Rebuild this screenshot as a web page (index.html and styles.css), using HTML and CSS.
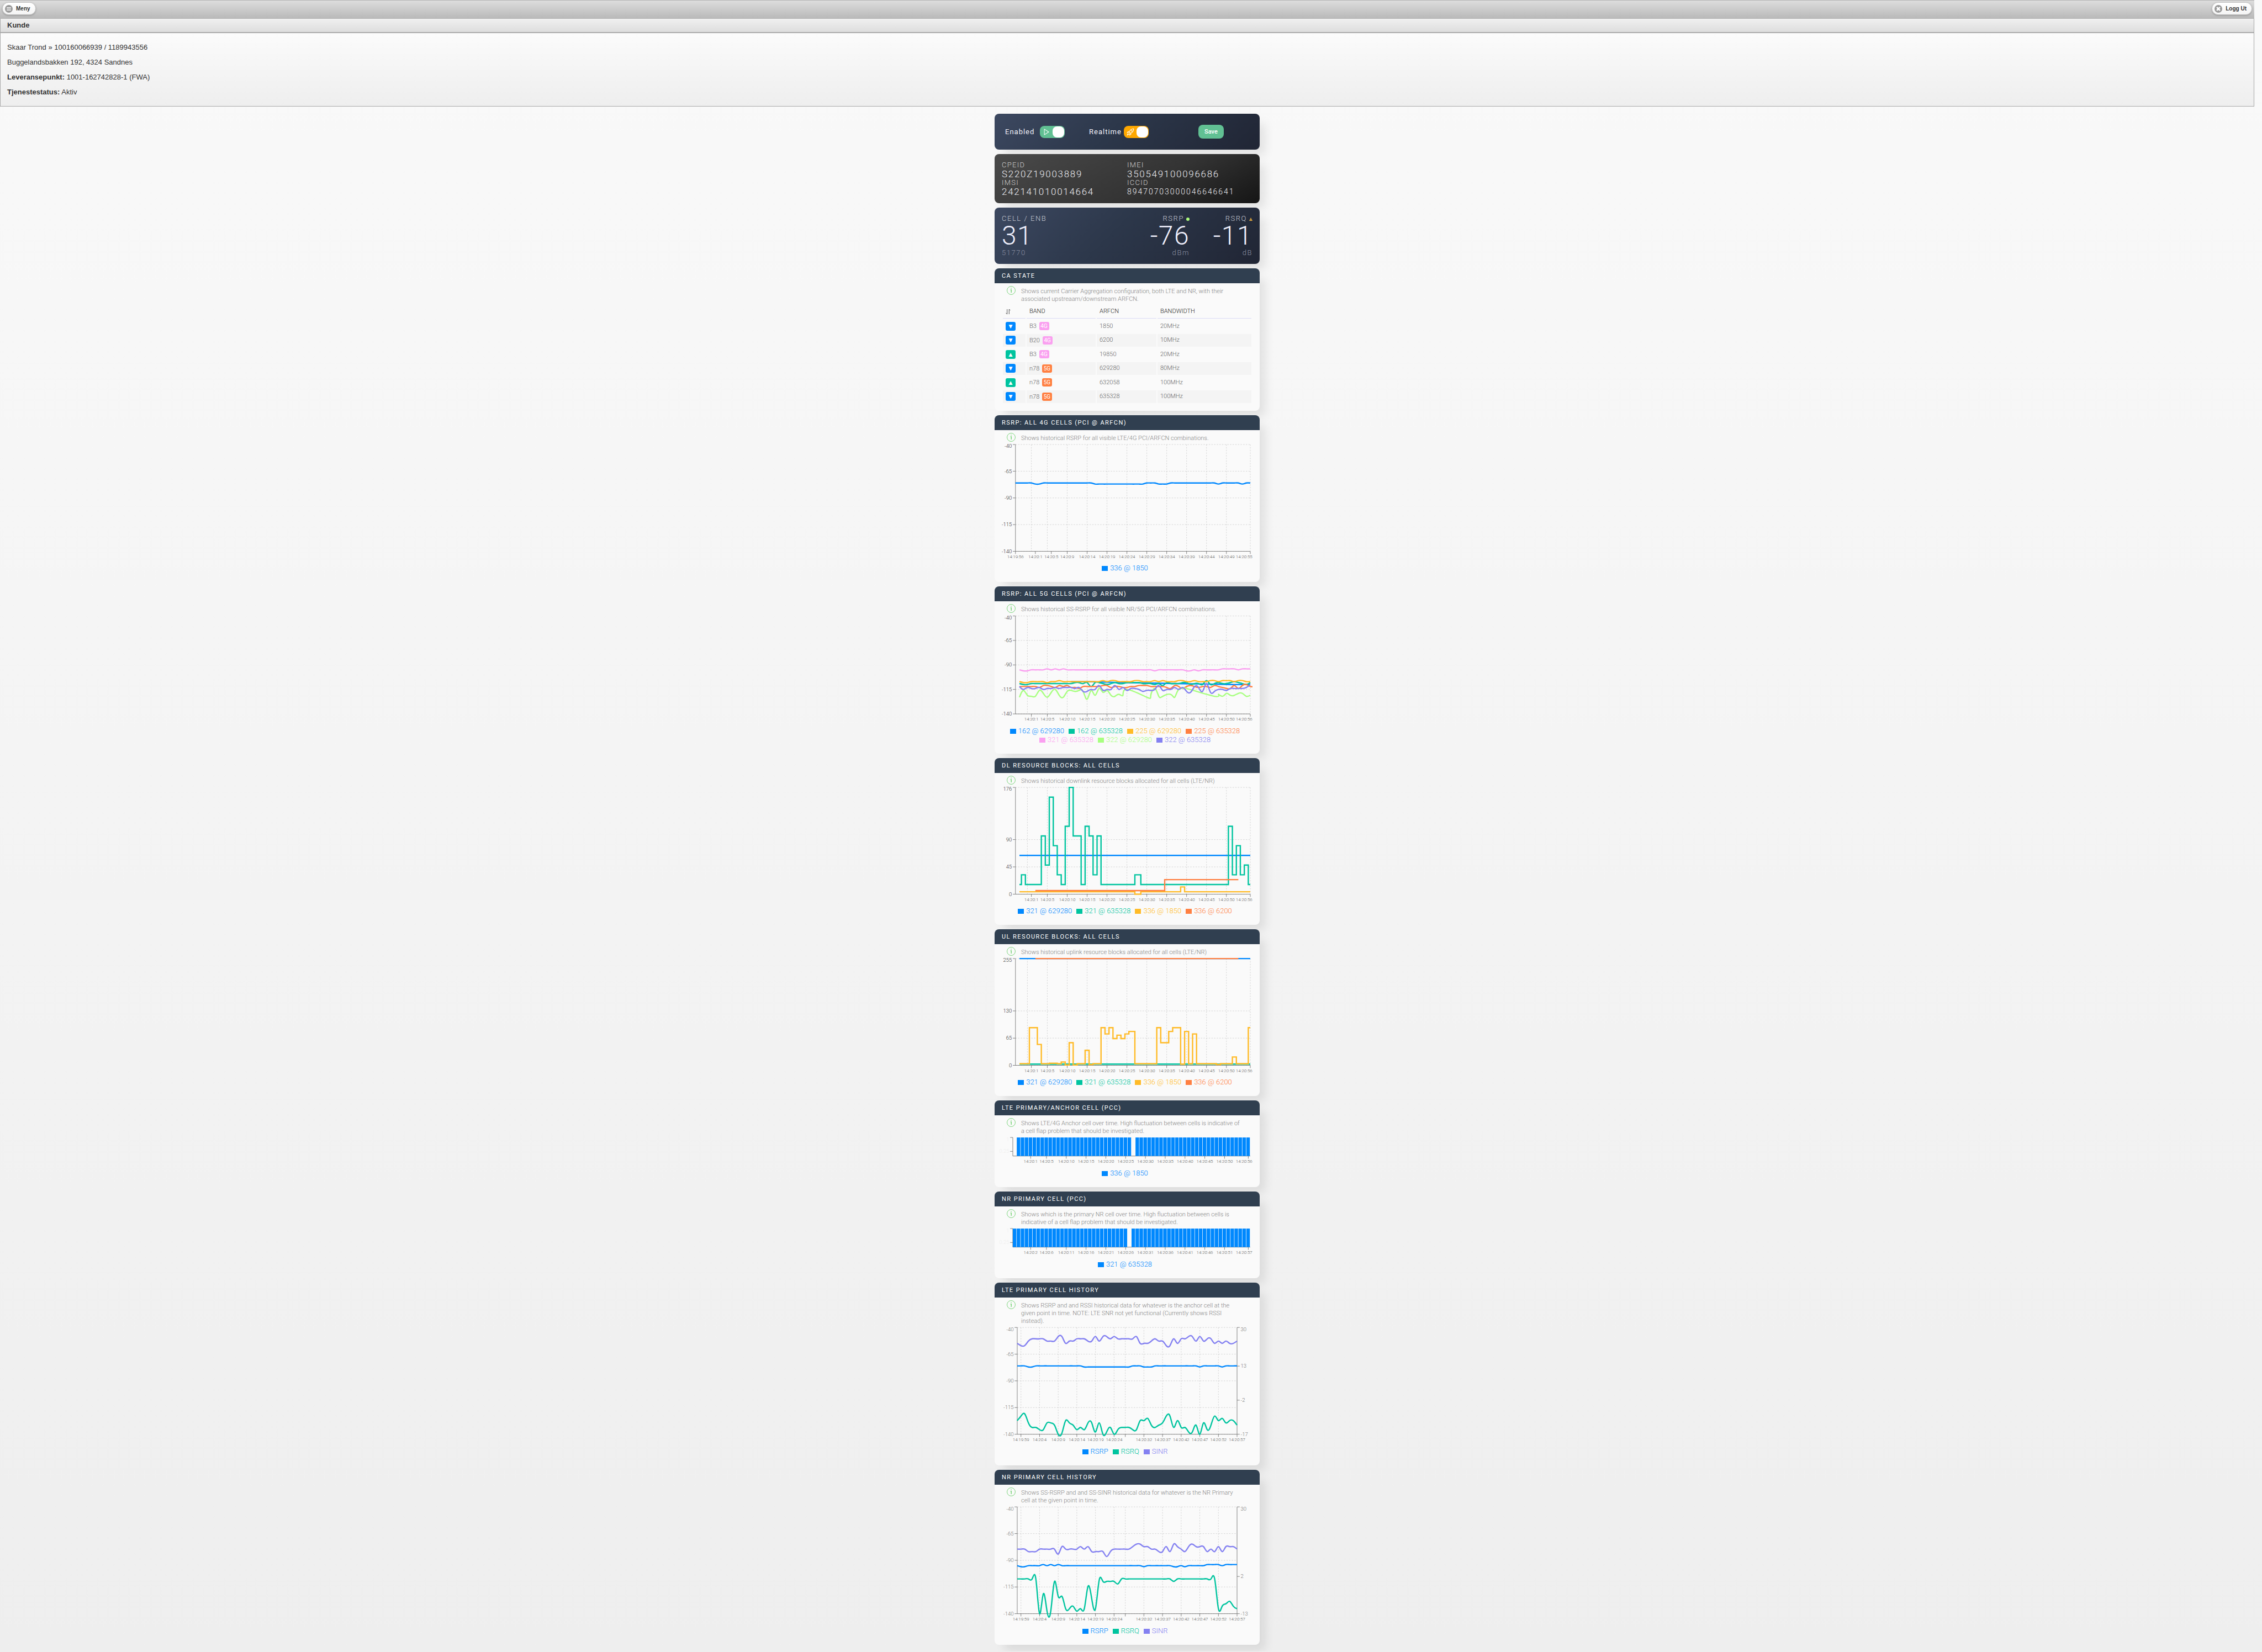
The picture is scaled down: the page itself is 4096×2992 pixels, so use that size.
FILE: index.html
```html
<!DOCTYPE html>
<html lang="no">
<head>
<meta charset="utf-8">
<meta name="viewport" content="width=device-width, initial-scale=1">
<title>Kunde</title>
<link rel="stylesheet" href="styles.css">
</head>
<body>
<header class="topbar">
  <button type="button" class="pill">
    <svg class="pill-icon" viewBox="0 0 18 18" aria-hidden="true"><circle cx="9" cy="9" r="9" fill="#999"/><path d="M4 6h10M4 9h10M4 12h10" stroke="#fff" stroke-width="1.6"/></svg>
    Meny
  </button>
  <button type="button" class="pill">
    <svg class="pill-icon" viewBox="0 0 18 18" aria-hidden="true"><circle cx="9" cy="9" r="9" fill="#999"/><path d="M5.2 5.2l7.6 7.6M12.8 5.2l-7.6 7.6" stroke="#fff" stroke-width="3.4"/></svg>
    Logg Ut
  </button>
</header>

<section class="customer">
  <h2 class="customer-title">Kunde</h2>
  <div class="customer-body">
    <p>Skaar Trond » 100160066939 / 1189943556</p>
    <p>Buggelandsbakken 192, 4324 Sandnes</p>
    <p><strong>Leveransepunkt:</strong> 1001-162742828-1 (FWA)</p>
    <p><strong>Tjenestestatus:</strong> Aktiv</p>
  </div>
</section>

<main class="cards">
  <form class="card dark controls">
    <label class="control">
      <span class="control-name">Enabled</span>
      <span class="switch switch-green">
        <input type="checkbox" checked>
        <svg viewBox="0 0 18 18" aria-hidden="true"><path d="M4 2.500v13l10-6.500z" fill="none" stroke="#fff" stroke-width="1.300" stroke-linejoin="round"/></svg>
      </span>
    </label>
    <label class="control">
      <span class="control-name">Realtime</span>
      <span class="switch switch-orange">
        <input type="checkbox" checked>
        <svg viewBox="0 0 18 18" aria-hidden="true"><path d="M6 9.500C7.500 5 11 1.500 16.500 1.500 16.500 7 13 10.500 8.500 12zM6.600 8H3.500L1.500 11l4 .2M10 11.400v3.100l-3 2-.3-4M3.500 13l-2 3.500 3.500-2" fill="none" stroke="#fff" stroke-width="1.300" stroke-linejoin="round"/><circle cx="11.800" cy="6.200" r="1.400" fill="none" stroke="#fff"/></svg>
      </span>
    </label>
    <button type="button" class="save">Save</button>
  </form>

  <section class="card black ids">
    <dl class="id-column">
      <dt>CPEID</dt><dd>S220Z19003889</dd>
      <dt>IMSI</dt><dd>242141010014664</dd>
    </dl>
    <dl class="id-column">
      <dt>IMEI</dt><dd>350549100096686</dd>
      <dt>ICCID</dt><dd class="long">89470703000046646641</dd>
    </dl>
  </section>

  <section class="card dark signal">
    <div class="metric">
      <span class="metric-name">CELL / ENB</span>
      <span class="metric-value">31</span>
      <span class="metric-unit">51770</span>
    </div>
    <div class="metric right">
      <span class="metric-name">RSRP<svg class="mark" viewBox="0 0 8 8" aria-hidden="true"><circle cx="4" cy="4" r="4" fill="#adfb7c"/></svg></span>
      <span class="metric-value">-76</span>
      <span class="metric-unit">dBm</span>
    </div>
    <div class="metric right">
      <span class="metric-name">RSRQ<svg class="mark low" viewBox="0 0 8 8" aria-hidden="true"><path d="M4 0l4 8H0z" fill="#d9a441"/><path d="M4 3v2.500M4 6.200v1" stroke="#6b5427" stroke-width=".8"/></svg></span>
      <span class="metric-value">-11</span>
      <span class="metric-unit">dB</span>
    </div>
  </section>

  <section class="card panel">
    <h3>CA STATE</h3>
    <p class="info">Shows current Carrier Aggregation configuration, both LTE and NR, with their associated upstreaam/downstream ARFCN.</p>
    <table class="carriers">
      <thead><tr><th class="c-dir"><svg class="updown" viewBox="0 0 10 12" aria-label="Direction"><path d="M3 1v10M.500 8.500L3 11M7 11V1M9.500 3.500L7 1" fill="none" stroke="#444"/></svg></th><th class="c-band">BAND</th><th class="c-arfcn">ARFCN</th><th>BANDWIDTH</th></tr></thead>
      <tbody>
        <tr><td><span class="dir down">▼</span></td><td>B3 <span class="gen g4">4G</span></td><td>1850</td><td>20MHz</td></tr>
        <tr><td><span class="dir down">▼</span></td><td>B20 <span class="gen g4">4G</span></td><td>6200</td><td>10MHz</td></tr>
        <tr><td><span class="dir up">▲</span></td><td>B3 <span class="gen g4">4G</span></td><td>19850</td><td>20MHz</td></tr>
        <tr><td><span class="dir down">▼</span></td><td>n78 <span class="gen g5">5G</span></td><td>629280</td><td>80MHz</td></tr>
        <tr><td><span class="dir up">▲</span></td><td>n78 <span class="gen g5">5G</span></td><td>632058</td><td>100MHz</td></tr>
        <tr><td><span class="dir down">▼</span></td><td>n78 <span class="gen g5">5G</span></td><td>635328</td><td>100MHz</td></tr>
      </tbody>
    </table>
  </section>

  <section class="card panel">
    <h3>RSRP: ALL 4G CELLS (PCI @ ARFCN)</h3>
    <p class="info">Shows historical RSRP for all visible LTE/4G PCI/ARFCN combinations.</p>
    <svg class="chart" id="rsrp-4g" viewBox="0 0 568 275"></svg>
    <ul class="legend"><li class="blue">336 @ 1850</li></ul>
  </section>

  <section class="card panel">
    <h3>RSRP: ALL 5G CELLS (PCI @ ARFCN)</h3>
    <p class="info">Shows historical SS-RSRP for all visible NR/5G PCI/ARFCN combinations.</p>
    <svg class="chart medium" id="rsrp-5g" viewBox="0 0 568 255"></svg>
    <ul class="legend"><li class="blue">162 @ 629280</li><li class="teal">162 @ 635328</li><li class="yellow">225 @ 629280</li><li class="orange">225 @ 635328</li><li class="pink">321 @ 635328</li><li class="lime">322 @ 629280</li><li class="purple">322 @ 635328</li></ul>
  </section>

  <section class="card panel">
    <h3>DL RESOURCE BLOCKS: ALL CELLS</h3>
    <p class="info">Shows historical downlink resource blocks allocated for all cells (LTE/NR)</p>
    <svg class="chart" id="rb-dl" viewBox="0 0 568 275"></svg>
    <ul class="legend"><li class="blue">321 @ 629280</li><li class="teal">321 @ 635328</li><li class="yellow">336 @ 1850</li><li class="orange">336 @ 6200</li></ul>
  </section>

  <section class="card panel">
    <h3>UL RESOURCE BLOCKS: ALL CELLS</h3>
    <p class="info">Shows historical uplink resource blocks allocated for all cells (LTE/NR)</p>
    <svg class="chart" id="rb-ul" viewBox="0 0 568 275"></svg>
    <ul class="legend"><li class="blue">321 @ 629280</li><li class="teal">321 @ 635328</li><li class="yellow">336 @ 1850</li><li class="orange">336 @ 6200</li></ul>
  </section>

  <section class="card panel">
    <h3>LTE PRIMARY/ANCHOR CELL (PCC)</h3>
    <p class="info">Shows LTE/4G Anchor cell over time. High fluctuation between cells is indicative of a cell flap problem that should be investigated.</p>
    <svg class="chart small" id="pcc-lte" viewBox="0 0 568 76"></svg>
    <ul class="legend"><li class="blue">336 @ 1850</li></ul>
  </section>

  <section class="card panel">
    <h3>NR PRIMARY CELL (PCC)</h3>
    <p class="info">Shows which is the primary NR cell over time. High fluctuation between cells is indicative of a cell flap problem that should be investigated.</p>
    <svg class="chart small" id="pcc-nr" viewBox="0 0 568 76"></svg>
    <ul class="legend"><li class="blue">321 @ 635328</li></ul>
  </section>

  <section class="card panel">
    <h3>LTE PRIMARY CELL HISTORY</h3>
    <p class="info">Shows RSRP and and RSSI historical data for whatever is the anchor cell at the given point in time. NOTE: LTE SNR not yet functional (Currently shows RSSI instead).</p>
    <svg class="chart large" id="history-lte" viewBox="0 0 568 276"></svg>
    <ul class="legend"><li class="blue">RSRP</li><li class="teal">RSRQ</li><li class="purple">SINR</li></ul>
  </section>

  <section class="card panel">
    <h3>NR PRIMARY CELL HISTORY</h3>
    <p class="info">Shows SS-RSRP and and SS-SINR historical data for whatever is the NR Primary cell at the given point in time.</p>
    <svg class="chart large" id="history-nr" viewBox="0 0 568 276"></svg>
    <ul class="legend"><li class="blue">RSRP</li><li class="teal">RSRQ</li><li class="purple">SINR</li></ul>
  </section>
</main>
<script src="charts.js"></script>
</body>
</html>
```
FILE: styles.css
```css
* { box-sizing: border-box; }

html { min-height: 100%; background: linear-gradient(#f9f9f9, #eeeeee); }

body {
  margin: 0;
  padding-right: 14px;
  color: #333;
  font: 13px/27px "Liberation Sans", Arial, sans-serif;
}

h2, h3, p, dl, dt, dd, ul { margin: 0; padding: 0; }

/* Top bar */
.topbar {
  display: flex;
  justify-content: space-between;
  align-items: flex-start;
  height: 34px;
  padding: 3px 4px;
  background: linear-gradient(#dddddd, #b9b9b9);
  border-top: 1px solid #b3b3b3;
  border-bottom: 1px solid #b3b3b3;
}

.pill {
  display: flex;
  align-items: center;
  gap: 6px;
  height: 23px;
  padding: 0 9px 0 4px;
  color: #333;
  font: bold 10px/12px "Liberation Sans", Arial, sans-serif;
  text-shadow: 0 1px 0 #fff;
  background: linear-gradient(#ffffff, #f4f4f4);
  border: 1px solid #c4c4c4;
  border-radius: 12px;
  box-shadow: 0 1px 3px rgba(0, 0, 0, .25);
}

.pill-icon { width: 14px; height: 14px; }

/* Customer */
.customer { border: 1px solid #a8a8a8; border-top: 0; }

.customer-title {
  height: 26px;
  padding: 0 12px;
  font-size: 13px;
  line-height: 24px;
  text-shadow: 0 1px 0 #fff;
  background: linear-gradient(#f0f0f0, #dddddd);
  border-bottom: 2px solid #ababab;
}

.customer-body {
  padding: 12px 12px;
  background: linear-gradient(#fbfbfb, #eeeeee);
}

/* Cards */
.cards {
  display: flex;
  flex-direction: column;
  gap: 8px;
  max-width: 480px;
  margin: 13px auto 12px;
  font-family: Roboto, "Open Sans", sans-serif;
  font-weight: 300;
}

.card {
  border-radius: 8px;
  box-shadow: 14px 14px 18px -4px rgba(0, 0, 0, .09);
}

.dark { background: linear-gradient(135deg, #3c4860 0%, #2c374a 45%, #202534 100%); }
.black { background: linear-gradient(150deg, #4a4a4a 0%, #333333 60%, #151515 100%); }

.controls {
  display: grid;
  grid-template-columns: 152px 198px auto;
  align-items: center;
  justify-items: start;
  height: 65px;
  padding: 0 19px;
  color: #f2f2fa;
}

.control { display: flex; align-items: center; font-weight: 400; }
.control-name { width: 63px; line-height: 22px; letter-spacing: 1px; }
.switch { position: relative; display: block; width: 45px; height: 22px; }

.switch input {
  appearance: none;
  display: flex;
  justify-content: flex-end;
  width: 45px;
  height: 22px;
  margin: 0;
  padding: 1px;
  border-radius: 8px;
}

.switch input::before { content: ""; width: 21px; border-radius: 8px; background: #fff; }
.switch-green input { background: #61c093; }
.switch-orange input { background: #ffa800; }
.switch svg { position: absolute; left: 5px; top: 4px; width: 14px; height: 14px; }

.save {
  width: 46px;
  height: 25px;
  padding: 0;
  color: #fff;
  font: 500 11px/14px Roboto, sans-serif;
  background: #61c093;
  border: 0;
  border-radius: 8px;
}

.ids {
  display: grid;
  grid-template-columns: 1fr 1fr;
  padding: 13px 13px 12px;
  color: #f0f0f5;
}

.id-column dt { color: #d0d0d0; font-size: 13px; line-height: 14px; letter-spacing: 0.1em; }
.id-column dd { font-size: 17px; line-height: 18px; letter-spacing: 0.1em; }
.id-column .long { font-size: 14px; letter-spacing: 0.14em; }

.signal {
  display: grid;
  grid-template-columns: 1fr auto 114px;
  padding: 13px;
}

.metric { display: flex; flex-direction: column; }
.metric.right { text-align: right; }
.metric-name { color: #c5c8d2; line-height: 14px; letter-spacing: 0.12em; }
.metric-value { color: #efeffc; font-size: 48px; line-height: 47px; letter-spacing: 0.03em; }
.metric-unit { color: #8a8fa2; line-height: 15px; letter-spacing: 0.12em; }
.mark { width: 6px; height: 6px; margin-left: 4px; }

/* Panels */
.panel { background: #fafafa; padding-bottom: 17px; }

.panel h3 {
  height: 27px;
  padding: 0 13px;
  color: #fff;
  font-size: 11px;
  font-weight: 400;
  line-height: 28px;
  letter-spacing: 0.13em;
  background: #303f50;
  border-radius: 8px 8px 0 0;
}

.info {
  padding: 8px 34px 0 48px;
  color: #858585;
  font-size: 11px;
  line-height: 14px;
  background: url("data:image/svg+xml,%3Csvg xmlns='http://www.w3.org/2000/svg' viewBox='0 0 20 20' fill='none' stroke='%235fcc5f'%3E%3Ccircle cx='10' cy='10' r='9.300'/%3E%3Cpath d='M8.500 8.500H10.200V15M10 4.500V6' stroke-width='1.500'/%3E%3C/svg%3E") 22px 5px / 16px 16px no-repeat;
}

.carriers {
  width: calc(100% - 26px);
  height: 182px;
  margin: 1px 13px -5px;
  border-spacing: 2px;
  table-layout: fixed;
  font-size: 11px;
  line-height: 14px;
}

.carriers th { height: 25px; padding: 0 5px; text-align: left; font-weight: 300; color: #222; border-bottom: 1px solid #dcdcf6; }
.carriers td { padding: 0 5px; color: #666; }
.carriers tbody tr:nth-child(even) td { background: #f4f4f4; }
.c-dir { width: 41px; }
.c-band { width: 125px; }
.c-arfcn { width: 108px; }
.updown { display: block; width: 9px; height: 11px; }

.dir, .gen {
  display: inline-block;
  width: 18px;
  color: #fff;
  text-align: center;
  border-radius: 3px;
}

.dir { height: 16px; font: 9px/16px "DejaVu Sans", sans-serif; vertical-align: middle; }
.gen { height: 15px; margin-left: 2px; font-size: 10px; font-weight: 400; line-height: 15px; }
.down { background: #0088fe; }
.up { background: #00c49f; }
.g4 { background: #faa0f0; }
.g5 { background: #ff8042; }

/* Charts */
.chart { display: block; width: calc(100% - 26px); height: 220px; margin: 0 13px; }
.chart.medium { height: 205px; }
.chart.small { height: 61px; overflow: visible; }
.chart.large { height: 221px; }
.chart text { font-family: Roboto, sans-serif; font-weight: 300; }
.grid { stroke: #ccc; stroke-dasharray: 3 3; }
.axis { stroke: #666; }
.tick-x { font-size: 10px; fill: #555; }
.tick-y { font-size: 12px; fill: #333; }
.tick-y.soft { fill: #777; }
.tick-y.faint { fill: #eee; }

.legend {
  display: flex;
  flex-wrap: wrap;
  justify-content: center;
  margin: 0 13px;
  list-style: none;
  font-size: 13px;
  line-height: 16px;
}

.legend li { display: flex; align-items: center; gap: 4px; margin-right: 8px; }
.legend li::before { content: ""; width: 11px; height: 9px; background: currentColor; }
.blue { color: #0088fe; }
.teal { color: #00c49f; }
.yellow { color: #ffbb28; }
.orange { color: #ff8042; }
.pink { color: #faa0f0; }
.lime { color: #a8ff80; }
.purple { color: #8481f1; }
```
FILE: charts.js
```js
const COLORS = { blue: "#0088fe", teal: "#00c49f", yellow: "#ffbb28", orange: "#ff8042", pink: "#faa0f0", lime: "#a8ff80", purple: "#8481f1" };
const NS = "http://www.w3.org/2000/svg";
const TOP = 5;

function add(parent, name, attrs, text) {
  const el = document.createElementNS(NS, name);
  for (const key in attrs) el.setAttribute(key, attrs[key]);
  if (text !== undefined) el.textContent = text;
  parent.appendChild(el);
}

// "-76:3 -77" becomes three samples of -76 and one of -77; "_" is a missing sample.
function samples(start, text) {
  const out = [];
  let i = start;
  for (const part of text.trim().split(/\s+/)) {
    const [v, n] = part.split(":");
    for (let k = 0; k < Number(n || 1); k++, i++) if (v !== "_") out.push([i, Number(v)]);
  }
  return out;
}

// Control points of a natural cubic spline along one coordinate.
function controls(x) {
  const n = x.length - 1, a = [0], b = [2], r = [x[0] + 2 * x[1]];
  for (let i = 1; i < n - 1; i++) { a[i] = 1; b[i] = 4; r[i] = 4 * x[i] + 2 * x[i + 1]; }
  a[n - 1] = 2; b[n - 1] = 7; r[n - 1] = 8 * x[n - 1] + x[n];
  for (let i = 1; i < n; i++) { const m = a[i] / b[i - 1]; b[i] -= m; r[i] -= m * r[i - 1]; }
  a[n - 1] = r[n - 1] / b[n - 1];
  for (let i = n - 2; i >= 0; i--) a[i] = (r[i] - a[i + 1]) / b[i];
  b[n - 1] = (x[n] + a[n - 1]) / 2;
  for (let i = 0; i < n - 1; i++) b[i] = 2 * x[i + 1] - a[i + 1];
  return [a, b];
}

function spline(points) {
  const xs = points.map(p => p[0]), ys = points.map(p => p[1]);
  const [ax, bx] = controls(xs), [ay, by] = controls(ys);
  let d = `M${xs[0]} ${ys[0]}`;
  for (let i = 0; i < xs.length - 1; i++) {
    d += `C${[ax[i], ay[i], bx[i], by[i], xs[i + 1], ys[i + 1]].map(v => v.toFixed(2)).join(" ")}`;
  }
  return d;
}

// Steps are [index, value] changes; the last entry closes the line.
function steps(points) {
  let d = `M${points[0][0]} ${points[0][1]}`;
  for (const [x, y] of points.slice(1)) d += `H${x}V${y}`;
  return d;
}

function draw(id, c) {
  const svg = document.getElementById(id);
  const bottom = TOP + c.height;
  const px = i => c.bars ? c.left + (c.right - c.left) / 60 * (i + 0.5) : c.left + (c.right - c.left) / 59 * i;
  const scale = (v, [lo, hi]) => bottom - (v - lo) / (hi - lo) * c.height;

  if (c.grid) {
    for (const [v] of c.y) add(svg, "line", { class: "grid", x1: c.left, x2: c.right, y1: scale(v, c.domain), y2: scale(v, c.domain) });
    for (const i of c.grid) add(svg, "line", { class: "grid", x1: px(i), x2: px(i), y1: TOP, y2: bottom });
  }

  add(svg, "line", { class: "axis", x1: c.left, x2: c.right, y1: bottom, y2: bottom });
  add(svg, "line", { class: "axis", x1: c.left, x2: c.left, y1: TOP, y2: bottom });
  if (c.y2) add(svg, "line", { class: "axis", x1: c.right, x2: c.right, y1: TOP, y2: bottom });

  for (const [i, label] of c.x) {
    add(svg, "line", { class: "axis", x1: px(i), x2: px(i), y1: bottom, y2: bottom + 6 });
    add(svg, "text", { class: "tick-x", x: Math.min(px(i), 549), y: bottom + 15, "text-anchor": "middle" }, label);
  }
  const yTicks = (ticks, domain, x, dir, anchor) => {
    for (const [v, label] of ticks) {
      const y = scale(v, domain);
      add(svg, "line", { class: "axis", x1: x, x2: x + dir * 6, y1: y, y2: y });
      add(svg, "text", { class: "tick-y " + (c.tone || ""), x: x + dir * 8, y: y + (y === TOP ? 8 : 4), "text-anchor": anchor }, label);
    }
  };
  yTicks(c.y, c.domain, c.left, -1, "end");
  if (c.y2) yTicks(c.y2, c.domain2, c.right, 1, "start");

  if (c.bars) {
    const band = (c.right - c.left) / 60;
    for (const i of c.bars) add(svg, "rect", { x: c.left + band * i, y: TOP, width: 8, height: c.height, fill: COLORS.blue });
  }
  for (const s of c.series || []) {
    const domain = s.second ? c.domain2 : c.domain;
    const points = s.points.map(([i, v]) => [px(i), scale(v, domain)]);
    add(svg, "path", { d: s.step ? steps(points) : spline(points), fill: "none", stroke: COLORS[s.color], "stroke-width": 3 });
  }
}

const ticks = (indexes, labels) => indexes.map((v, k) => [v, labels[k]]);
const labelled = values => values.map(v => [v, String(v)]);
const RSRP_TICKS = labelled([-40, -65, -90, -115, -140]);
const FIVES = ["14:20:1", "14:20:5", "14:20:10", "14:20:15", "14:20:20", "14:20:25", "14:20:30", "14:20:35", "14:20:40", "14:20:45", "14:20:50", "14:20:56"];
const SIXES = ["14:20:2", "14:20:6", "14:20:11", "14:20:16", "14:20:21", "14:20:26", "14:20:31", "14:20:36", "14:20:41", "14:20:46", "14:20:51", "14:20:57"];
const EVERY_FIVE = [4, 8, 13, 18, 23, 28, 33, 38, 43, 48, 53, 59];
const FIVE_GRID = [3, 8, 13, 18, 23, 28, 33, 38, 43, 48, 53, 59];

draw("rsrp-4g", {
  left: 31, right: 563, height: 242, domain: [-140, -40], y: RSRP_TICKS,
  grid: [4, 8, 13, 18, 23, 28, 33, 38, 43, 48, 53, 59],
  x: ticks([0, 5, 9, 13, 18, 23, 28, 33, 38, 43, 48, 53, 59],
    ["14:19:56", "14:20:1", "14:20:5", "14:20:9", "14:20:14", "14:20:19", "14:20:24", "14:20:29", "14:20:34", "14:20:39", "14:20:44", "14:20:49", "14:20:55"]),
  series: [{ color: "blue", points: samples(0, "-76:5 -77:2 -76:13 -77:13 -76:3 -77:3 -76:12 -77 -76:5 -77 -76:2") }]
});

draw("rsrp-5g", {
  left: 31, right: 563, height: 222, domain: [-140, -40], y: RSRP_TICKS, grid: FIVE_GRID, x: ticks(EVERY_FIVE, FIVES),
  series: [
    { color: "blue", points: [[14, -107], [18, -107], [22, -107.5], [28, -108], [34, -108.5], [40, -109], [48, -109.5], [54, -110], [59, -110]] },
    { color: "teal", points: samples(1, "-109 -110:2 -109:11 -108:2 -109 -108 -112 -108:2 -109 -110 -109 -108 -109:2 -108:4 -109:3 -110 -109 -111 -108 -109:3 -108:2 -110 -109:2 -110 -106 -110 -109 -108 -109:2 -108 -107 -108 -109 -110 -108") },
    { color: "yellow", points: samples(1, "-107 -108:2 -107:4 -108 -107:2 -106 -107:10 -106 -107 -106:2 -107:4 -106:2 -107:3 -106 -107 -106 -107:3 -106:2 -107:2 -106 -107:3 -106:2 -107 -106:3 -107 -106:2 -107:2") },
    { color: "orange", points: samples(1, "-112:5 -113 -111:2 -112 -113 -111 -112 -111 -113:2 -114 -112:5 -111:2 -113 -112:2 -113:2 -112:2 -111:3 -112:4 -113 -114 -111 -112 -114 -112 -111 -112 -113 -112:2 -113 -111 -112 -113 -114:2 -111 -114 -111 -110 -112:3") },
    { color: "pink", points: samples(1, "-95 -96:2 -95:4 -94 -95 -94 -95 -94 -95:22 -96 -95:7 -96:2 -95 -96 -95:5 -94:4 -95 -94:3") },
    { color: "lime", points: samples(1, "-123 -116 -121 -122:2 -116 -119 -123 -118 -115 -121 -123 -117 -116 -117 -116 -117 -125 -116 -121 -114 -118 -116 -121 -122 -120 -121 -115 _:4 -123 -121 -114 -122:2 _ -120 -123 -115 -114:2 _:6 -122 -120 -122 -119 -121:2 -119:2 -122 -121") },
    { color: "purple", points: samples(1, "-112 -115 -113 -114:2 -113 -115 -114:2 -113 -114 -113:3 -114 -113 -117:2 -115:2 -111 -116 -115:2 -111 -115 -113 -116 -114:2 -115 -117 -116:2 -115 -111 -116 -115:2 -113 -115 -113 -117 -118 -112 -113 -117 -109 -118 -117 -115:2 -116 -114:4 -113 -110") }
  ]
});

draw("rb-dl", {
  left: 31, right: 563, height: 242, domain: [0, 176], y: labelled([176, 90, 45, 0]), grid: FIVE_GRID, x: ticks(EVERY_FIVE, FIVES),
  series: [
    { color: "blue", step: true, points: [[1, 64], [59, 64]] },
    { color: "teal", step: true, points: [[1, 16], [1.5, 32], [2.5, 16], [6.5, 96], [7.5, 48], [8.5, 160], [9.5, 80], [10.5, 32], [11.5, 16], [12.5, 112], [13.5, 176], [14.5, 96], [16.5, 16], [17.5, 112], [18.5, 96], [19.5, 32], [20.5, 96], [21.5, 16], [30, 32], [31.5, 16], [53.5, 112], [54.5, 32], [55.5, 80], [56.5, 32], [57.5, 48], [58.5, 16], [59, 16]] },
    { color: "yellow", step: true, points: [[1, 4], [30, 0], [31.5, 4], [41.5, 12], [42.5, 4], [59, 4]] },
    { color: "orange", step: true, points: [[5, 6], [37.5, 24], [56, 24]] }
  ]
});

draw("rb-ul", {
  left: 31, right: 563, height: 242, domain: [0, 255], y: labelled([255, 130, 65, 0]), grid: FIVE_GRID, x: ticks(EVERY_FIVE, FIVES),
  series: [
    { color: "blue", step: true, points: [[1, 255], [59, 255]] },
    { color: "teal", step: true, points: [[1, 3], [59, 3]] },
    { color: "yellow", step: true, points: [[1, 4], [3.5, 90], [5.5, 50], [6.5, 4], [8.5, 5], [10.5, 4], [11.5, 8], [12.5, 1], [13.5, 54], [14.5, 1], [15.5, 4], [17.5, 36], [18.5, 2], [19.5, 4], [21.5, 90], [22.5, 75], [23.5, 90], [24.5, 64], [25.5, 72], [26.5, 64], [27.5, 75], [28.5, 81], [30, 4], [35.5, 90], [36.5, 54], [38.5, 81], [39.5, 90], [41.5, 3], [42.5, 81], [43.5, 4], [44.5, 75], [45.5, 4], [50.5, 2], [51.5, 4], [54.5, 20], [55.5, 4], [58.5, 90], [59, 90]] },
    { color: "orange", step: true, points: [[5, 255], [56, 255]] }
  ]
});

const range = (from, to) => Array.from({ length: to - from + 1 }, (_, k) => from + k);
const pcc = { left: 25, right: 563, height: 42, domain: [0, 1], y: [[1, "1"], [0.25, "0.25"]], tone: "faint" };
draw("pcc-lte", { ...pcc, x: ticks(EVERY_FIVE, FIVES), bars: [...range(1, 29), ...range(31, 59)] });
draw("pcc-nr", { ...pcc, x: ticks(EVERY_FIVE, SIXES), bars: [...range(0, 28), ...range(30, 59)] });

const history = {
  left: 35, right: 533, height: 242, domain: [-140, -40], y: RSRP_TICKS, tone: "soft",
  grid: [1, 6, 11, 16, 21, 26, 29, 34, 39, 44, 49, 54],
  x: ticks([1, 6, 11, 16, 21, 26, 29, 34, 39, 44, 49, 54, 59],
    ["14:19:59", "14:20:4", "14:20:9", "14:20:14", "14:20:19", "14:20:24", "", "14:20:32", "14:20:37", "14:20:42", "14:20:47", "14:20:52", "14:20:57"])
};

draw("history-lte", {
  ...history, domain2: [-17, 30], y2: labelled([30, 13, -2, -17]),
  series: [
    { color: "blue", points: samples(0, "-76:3 -77:2 -76:13 -77:13 -76:3 -77:3 -76:12 -77 -76:5 -77 -76:4") },
    { color: "teal", second: true, points: samples(0, "-11 -9 -8 -12 -14:2 -15:2 -12:2 -13 -17 -16.5 -11 -12 -13 -15 -14 -15 -12:2 -16 -12 -17 -16 -14 -17 -15 -14:3 -15:2 -11:2 -10 -13 -14 -13 -12 -9:2 -14 -11 -14:2 -16:2 -13 -17 -12 -15 -13 -9 -11 -10 -12 -11:2 -13") },
    { color: "purple", second: true, points: samples(0, "23 22:2 24 25:4 24:3 26:2 23 24:2 25:3 24:2 26 24 26:2 25 26 25:5 26 23:3 24 25 24:2 22:2 25 23 25:2 26:2 24 26 24 25:2 23 24 23 24 23:2 24") }
  ]
});

draw("history-nr", {
  ...history, domain2: [-13, 30], y2: labelled([30, 2, -13]),
  series: [
    { color: "blue", points: samples(0, "-95 -96:2 -95:4 -94 -95 -94 -95 -94 -95:22 -96 -95:7 -96:2 -95 -96 -95:5 -94:4 -95 -94:4") },
    { color: "teal", second: true, points: samples(0, "1:6 -13 -5 -12:2 0 -6:2 -11:2 -10 -12 -11:2 -2 -7 -11 0.5 0:4 -1 1:14 0 1:11 -11 -10 -9 -8 -10 -11") },
    { color: "purple", second: true, points: samples(0, "13:3 12:3 13:5 11 14 13:4 14 13 14 12:4 10 12 13:5 14 15:2 14:2 13:2 12:2 14 12 15 14 13 12 14 15 14:3 12 13 12 14 12 14:3 13") }
  ]
});
```
